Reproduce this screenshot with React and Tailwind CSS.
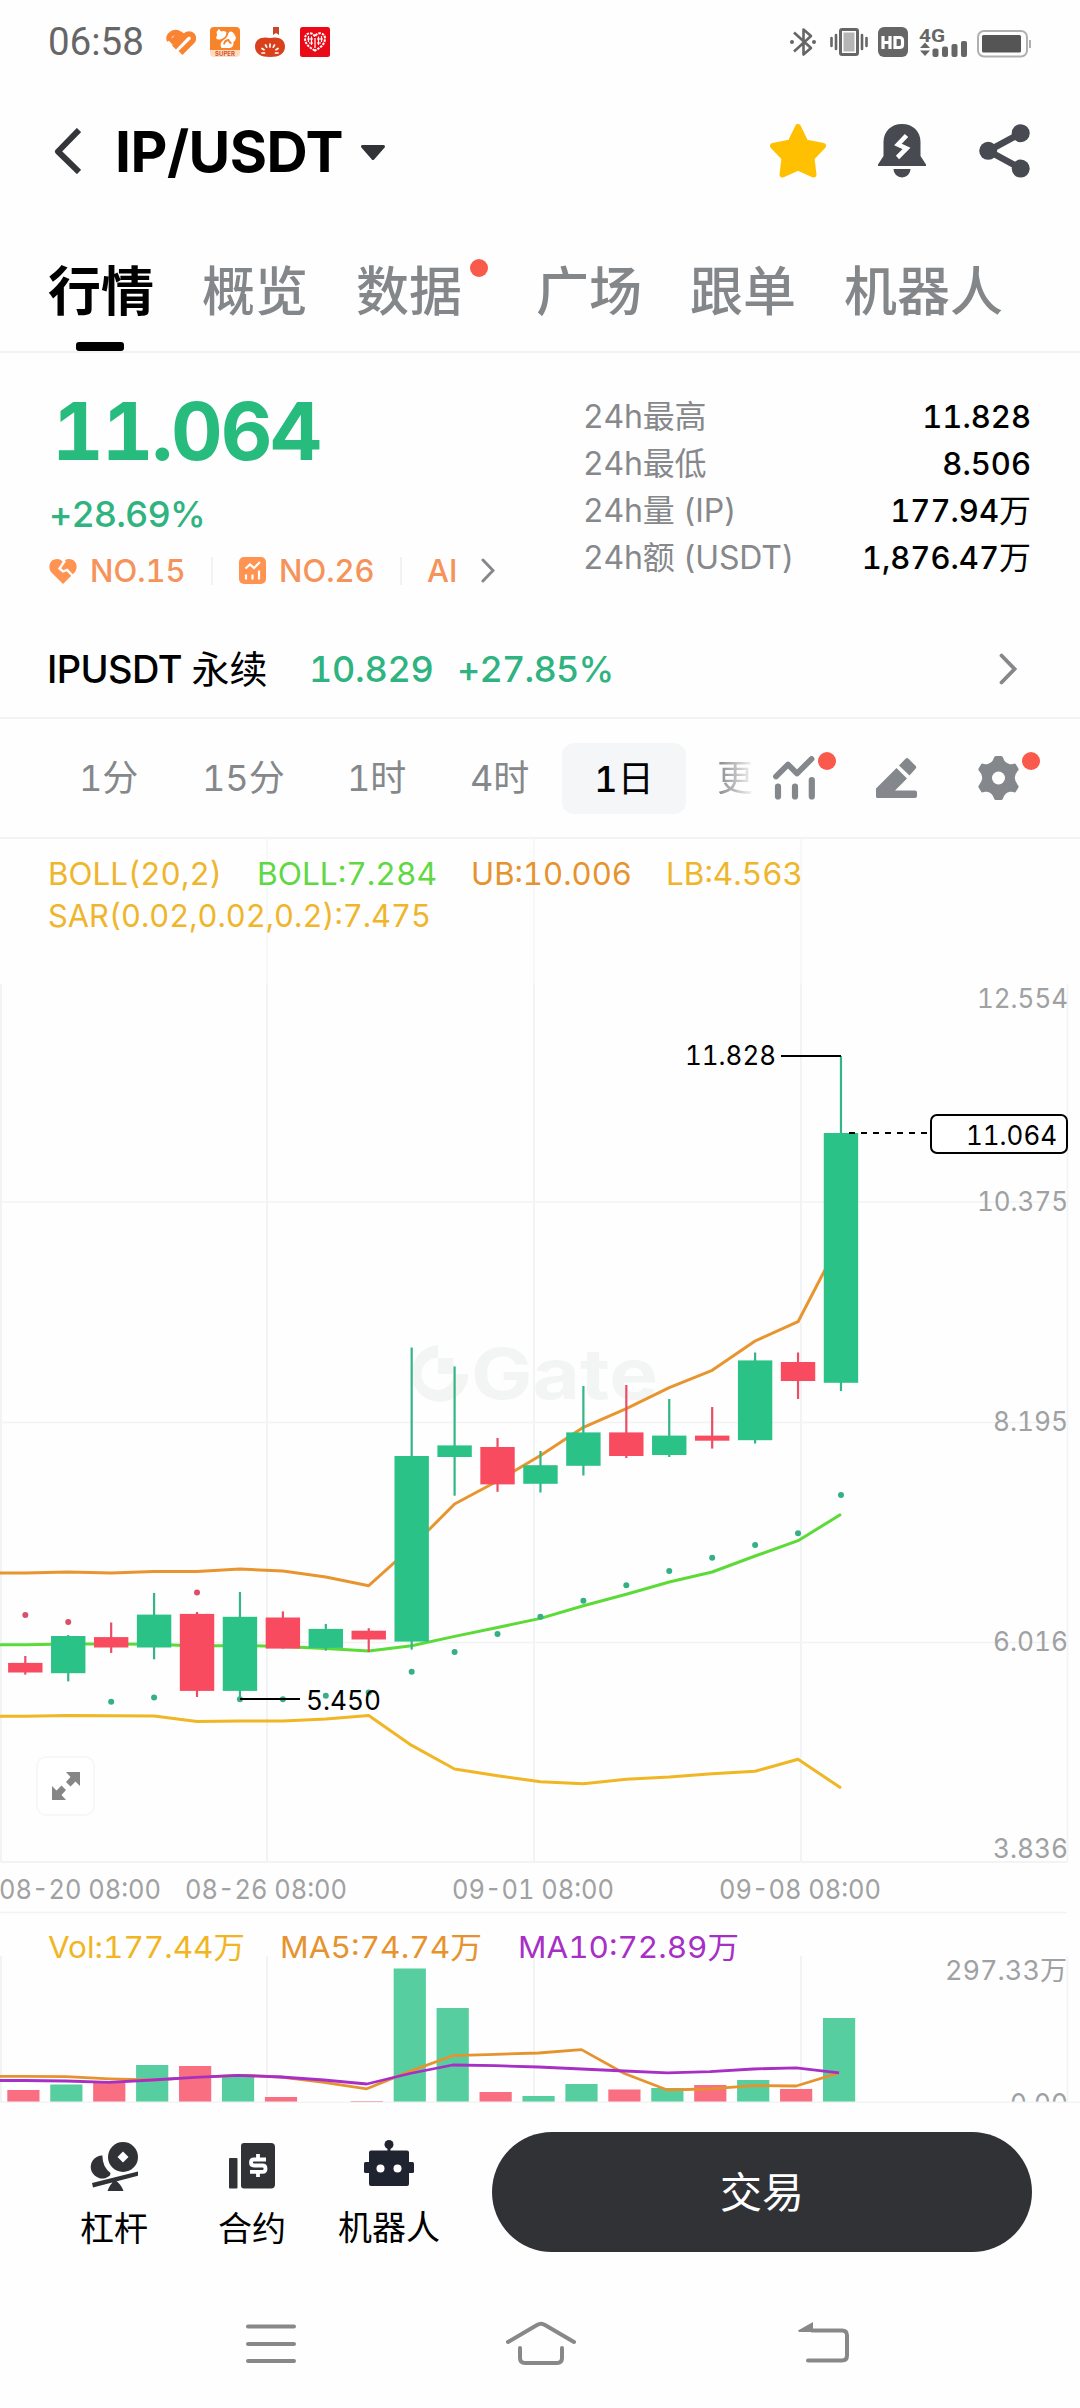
import React from "react";

const UP = "#2bc287";
const DOWN = "#f84b60";
const STEP = 42.93;
const cx = (i) => 25.3 + STEP * i;
const vx = (i) => 23.4 + STEP * i;

// [rising, bodyTop, bodyBottom, wickTop, wickBottom]
const candles = [
  [0, 1662.9, 1672.5, 1656, 1674.6],
  [1, 1636, 1673.2, 1635, 1681.4],
  [0, 1637.1, 1647.5, 1622.5, 1652.9],
  [1, 1614.6, 1647.5, 1592.9, 1659.3],
  [0, 1613.9, 1690.9, 1612, 1697],
  [1, 1616.8, 1690.9, 1592, 1700],
  [0, 1617.5, 1648.6, 1611.4, 1648.6],
  [1, 1628.9, 1647.9, 1623.9, 1650.7],
  [0, 1630.7, 1639.5, 1628.2, 1652],
  [1, 1456, 1641.6, 1347.5, 1649.6],
  [1, 1445.4, 1457, 1366.4, 1495.7],
  [0, 1447, 1484.4, 1438, 1491.8],
  [1, 1465.2, 1483.8, 1451, 1492.5],
  [1, 1432.4, 1465.8, 1386, 1475.5],
  [0, 1432.4, 1456, 1385, 1458],
  [1, 1435.6, 1455, 1399, 1457],
  [0, 1435.6, 1440.7, 1407, 1448.6],
  [1, 1360.4, 1440.2, 1352.5, 1443.5],
  [0, 1362, 1381, 1352.5, 1399],
  [1, 1133, 1382.8, 1056, 1391],
];
const upper = [1573, 1572, 1573, 1571.4, 1571.4, 1569, 1571, 1577, 1585.7, 1547, 1504, 1481, 1455.5, 1427.3, 1408.7, 1387.7, 1370.3, 1341, 1321.7, 1239];
const middle = [1644.8, 1644, 1644, 1644.3, 1646, 1645.4, 1646.4, 1648.6, 1651, 1645.7, 1636.4, 1627.5, 1618.4, 1605.7, 1594.3, 1582, 1572, 1556, 1540.7, 1514.3];
const lower = [1716.2, 1715.4, 1715.8, 1716, 1721.4, 1721, 1721, 1719, 1715.4, 1745.4, 1769, 1775.7, 1781.7, 1783.7, 1779.3, 1777, 1773.7, 1771.3, 1759.3, 1788];
const sar = [
  [0, 1615], [0, 1622], [1, 1701.8], [1, 1697.5], [0, 1592.5], [1, 1699.3], [1, 1699.3], [1, 1695.7], [1, 1692.5], [1, 1671.8],
  [1, 1652], [1, 1634], [1, 1616.8], [1, 1600.7], [1, 1585.3], [1, 1571], [1, 1557.7], [1, 1545], [1, 1533.3], [1, 1495],
];
const volume = [2090, 2084.5, 2083, 2065, 2066, 2077, 2097, 2102, 2101, 1968.5, 2008, 2092, 2096, 2084, 2089.5, 2088, 2085, 2080, 2089, 2018];
const ma5 = [2076.3, 2076.7, 2078.8, 2080, 2077.4, 2075.3, 2077, 2082.4, 2088.8, 2071.4, 2055.7, 2054.3, 2053, 2049.6, 2073.5, 2090, 2088.8, 2085.6, 2086, 2072.8];
const ma10 = [2080.5, 2081, 2082.4, 2080, 2077.4, 2075.3, 2077, 2080, 2084, 2073.5, 2065, 2065.7, 2067, 2069, 2071, 2072.8, 2071.7, 2069, 2067.8, 2072.8];

const line = (ys, fx) => `-2,${ys[0]} ` + ys.map((y, i) => `${fx(i)},${y}`).join(" ");

function Label({ x, y, w, size = 27, fill = "#9fa1a3", weight = 400, children }) {
  return (
    <text x={x} y={y} fontSize={size} fill={fill} fontWeight={weight} textLength={w} lengthAdjust="spacingAndGlyphs">
      {children}
    </text>
  );
}

function Chart() {
  return (
    <svg className="block h-[1264px] w-[1080px] tabular-nums" viewBox="0 839 1080 1264">
      <g fill="#f3f5f5">
        <path d="M438 1345v13a16 16 0 1 0 15.5 16h15A28.5 28.5 0 1 1 438 1345zM438 1358h15.5v16H438z" />
        <text x="471" y="1399" fontSize="70" fontWeight="700" textLength="187" lengthAdjust="spacingAndGlyphs">Gate</text>
      </g>
      <g stroke="#f2f3f4" strokeWidth="2">
        {[1, 267, 534, 801].map((x) => (
          <path key={x} d={`M${x} 984V1862M${x} 1956V2102`} />
        ))}
        <path d="M1067.5 984V1862M1067.5 1956V2102" strokeWidth="1.5" />
        <path d="M267 839V984M534 839V984M801 839V984" stroke="#f8f8f9" />
        <path d="M0 1202H1067M0 1422.5H1067M0 1642.5H1067M0 1912.5H1067" strokeWidth="1.3" />
        <path d="M0 1862H1067" />
      </g>
      <Label x={977} y={1008} w={91}>12.554</Label>
      <Label x={977} y={1211} w={91}>10.375</Label>
      <Label x={993} y={1431} w={75}>8.195</Label>
      <Label x={993} y={1651} w={75}>6.016</Label>
      <Label x={993} y={1858} w={75}>3.836</Label>

      <g fill="none" strokeWidth="3" strokeLinejoin="round">
        <polyline points={line(upper, cx)} stroke="#e8952f" />
        <polyline points={line(middle, cx)} stroke="#5cdb38" />
        <polyline points={line(lower, cx)} stroke="#f0b624" />
      </g>
      {candles.map(([up, top, bottom, high, low], i) => (
        <g key={i} fill={up ? UP : DOWN}>
          <rect x={cx(i) - 1.1} y={high} width="2.2" height={low - high} fill={up ? "#34b585" : "#e84f64"} />
          <rect x={cx(i) - 17.2} y={top} width="34.4" height={bottom - top} />
        </g>
      ))}
      {sar.map(([up, y], i) => (
        <circle key={i} cx={cx(i)} cy={y} r="3" fill={up ? "#35b083" : "#dd4f69"} />
      ))}

      <path d="M781 1056H841M240 1699H300" stroke="#000" strokeWidth="2" />
      <path d="M849 1133H930" stroke="#000" strokeWidth="2" strokeDasharray="6 6" />
      <rect x="931" y="1115" width="136" height="38" rx="6" fill="#fff" stroke="#000" strokeWidth="2" />
      <Label x={685} y={1065} w={91} fill="#000">11.828</Label>
      <Label x={966} y={1145} w={91} fill="#000">11.064</Label>
      <Label x={306} y={1710} w={75} fill="#000">5.450</Label>

      <Label x={48} y={885} w={174} size={31} fill="#efb52b">BOLL(20,2)</Label>
      <Label x={257} y={885} w={180} size={31} fill="#5fd843">BOLL:7.284</Label>
      <Label x={471} y={885} w={161} size={31} fill="#e6932f">UB:10.006</Label>
      <Label x={666} y={885} w={137} size={31} fill="#efb52b">LB:4.563</Label>
      <Label x={48} y={927} w={383} size={31} fill="#efb52b">SAR(0.02,0.02,0.2):7.475</Label>

      <Label x={-1} y={1899} w={162}>08-20 08:00</Label>
      <Label x={185} y={1899} w={162}>08-26 08:00</Label>
      <Label x={452} y={1899} w={162}>09-01 08:00</Label>
      <Label x={719} y={1899} w={162}>09-08 08:00</Label>

      {volume.map((y, i) => (
        <rect key={i} x={vx(i) - 16.1} y={y} width="32.2" height={2102 - y} fill={candles[i][0] ? "#56ce9f" : "#f96f81"} />
      ))}
      <g fill="none" strokeWidth="2.8" strokeLinejoin="round">
        <polyline points={line(ma5, vx)} stroke="#e6932f" />
        <polyline points={line(ma10, vx)} stroke="#a72fc6" />
      </g>
      <Label x={48} y={1957.5} w={197} size={30} fill="#f1b51f">Vol:177.44万</Label>
      <Label x={280} y={1957.5} w={202} size={30} fill="#e6932f">MA5:74.74万</Label>
      <Label x={518} y={1957.5} w={221} size={30} fill="#a72fc6">MA10:72.89万</Label>
      <Label x={945} y={1980} w={122}>297.33万</Label>
      <Label x={1010} y={2113} w={58}>0.00</Label>
      <rect x="0" y="2101.5" width="1080" height="2" fill="#f2f3f4" />
    </svg>
  );
}

function StatusBar() {
  return (
    <div className="flex h-[84px] items-center pl-12 pr-12 text-[#666]">
      <span className="w-[97px] font-[Roboto] text-[38.5px] leading-none">06:58</span>
      <svg className="ml-[21px]" width="30" height="26" viewBox="0 0 30 26">
        <g stroke="#f98330" strokeLinecap="butt" strokeWidth="5.4" fill="none">
          <path d="M3.500 11.500a5 5 0 0 1 2-6.500q4-3 8.500 0L5 14" />
          <path d="M8 18.500L20 6.200a4.300 4.300 0 0 1 6.200 6.200L14.500 24" />
          <path d="M13.500 19.500L21 12" stroke="#fff" strokeWidth="1.600" />
        </g>
      </svg>
      <svg className="ml-[14px]" width="30" height="30" viewBox="0 0 30 30">
        <rect width="30" height="30" rx="4" fill="#ffdcc0" />
        <path d="M4 0h22a4 4 0 0 1 4 4v19H0V4a4 4 0 0 1 4-4z" fill="#f8842a" />
        <path d="M6.500 5L9 2l2 2.500q4-1.500 5.500 1-.500 5-5 6.500Q7.500 13.500 6 11q2-3 .5-6z" fill="#fff" />
        <path d="M24.500 7.500q-3-5-6-1.500-1 5-5 7-4.500 3-2 8h8.500q4-1 3.500-6 4-3 1-7.500z" fill="#fff" />
        <path d="M14 17.500q.5-4 4.500-4.500 1 3 3 3" fill="none" stroke="#f8842a" strokeWidth="1.800" />
        <text x="15" y="28.500" fontSize="6" fontWeight="700" textAnchor="middle" fill="#d5532b">SUPER</text>
      </svg>
      <svg className="ml-[15px]" width="30" height="30" viewBox="0 0 30 30">
        <path d="M18 0h6v8l-3-2-3 2z" fill="#c9472b" />
        <path d="M15 11c8-2 15 1 15 8.500C30 27 24 30 15 30S0 27 0 19.500C0 12 7 9 15 11z" fill="#d9401c" />
        <path d="M15 17v3M10.500 18l1.200 2.200M19.500 18l-1.200 2.200M7 21.500l2 1.200M23 21.500l-2 1.200M7 26h2.500M20.500 26H23" stroke="#fff" strokeWidth="1.700" strokeLinecap="round" />
      </svg>
      <svg className="ml-[15px]" width="30" height="30" viewBox="0 0 30 30">
        <rect width="30" height="30" rx="2.500" fill="#ea0a17" />
        <path d="M15 23.500C8 20 5 16 5 11.500c0-6 7.500-7 10-2 2.500-5 10-4 10 2C25 16 22 20 15 23.500z" fill="none" stroke="#fff" strokeWidth="2" strokeDasharray="2.500 1" />
        <path d="M8.500 9v6M11.500 9.500V18M18.500 9.500V18M21.500 9v6M15 11v10M7 12h6M17 12h6M9 16h4M17 16h4" stroke="#fff" strokeWidth="1.200" />
      </svg>

      <svg className="ml-auto" width="26" height="30" viewBox="0 0 26 30" fill="none" stroke="#666" strokeWidth="2.600">
        <path d="M4 5.500L21 21l-7.500 6.500V2.500L21 9 4 24.500" strokeLinejoin="round" />
        <circle cx="2" cy="15" r="2" fill="#666" stroke="none" />
        <circle cx="24" cy="15" r="2" fill="#666" stroke="none" />
      </svg>
      <svg className="ml-[14px]" width="38" height="30" viewBox="0 0 38 30">
        <rect x="10.500" y="2.500" width="17" height="25" rx="1.500" fill="none" stroke="#666" strokeWidth="3" />
        <rect x="13.500" y="5.500" width="11" height="19" fill="#b5b5b5" />
        <path d="M1.500 11v8M6 8v14M32 8v14M36.500 11v8" stroke="#666" strokeWidth="2.600" strokeLinecap="round" />
      </svg>
      <svg className="ml-[10px]" width="30" height="30" viewBox="0 0 30 30">
        <rect width="30" height="30" rx="6" fill="#666" />
        <path d="M5 9v13M12 9v13M5 15.500h7M17 10.500h4.500q3 0 3 3v4q0 3-3 3H17z" fill="none" stroke="#fff" strokeWidth="3.200" />
      </svg>
      <svg className="ml-[12px] overflow-visible" width="48" height="32" viewBox="0 0 48 32" fill="#666">
        <text x="-1" y="15.500" fontSize="19" fontWeight="700" textLength="26" lengthAdjust="spacingAndGlyphs" fontFamily="Roboto">4G</text>
        <path d="M0 22l5-5.500 5 5.500zM0 24.500h10L5 30z" />
        <rect x="12.500" y="22.500" width="6" height="8.500" rx="2" />
        <rect x="22" y="20.500" width="6" height="10.500" rx="2" />
        <rect x="31.500" y="18" width="6" height="13" rx="2" />
        <rect x="41" y="15" width="6" height="16" rx="2" />
      </svg>
      <svg className="ml-[9px] mt-[3px]" width="55" height="28" viewBox="0 0 55 28">
        <rect x="1" y="1" width="49" height="25.500" rx="6" fill="none" stroke="#b0b0b0" strokeWidth="2" />
        <rect x="5" y="5" width="39" height="17.500" rx="1.500" fill="#555" />
        <path d="M53 10v8" stroke="#b0b0b0" strokeWidth="2" />
      </svg>
    </div>
  );
}

function Header() {
  return (
    <div className="flex h-[134px] items-center pl-[54px] pr-[50px]">
      <svg width="27" height="46" viewBox="0 0 27 46" fill="none" stroke="#35363a" strokeWidth="6">
        <path d="M25 2L4 23.500 25 44" strokeLinejoin="round" />
      </svg>
      <h1 className="ml-[34px] w-[229px] whitespace-nowrap text-[57px] font-bold leading-none tracking-[-0.5px]">IP/USDT</h1>
      <svg className="ml-[16px] mt-[3px]" width="26" height="18" viewBox="0 0 26 18">
        <path d="M2.500 2.500h21L13 14.500z" fill="#323337" stroke="#323337" strokeWidth="3" strokeLinejoin="round" />
      </svg>
      <svg className="ml-auto" width="56" height="54" viewBox="0 0 56 54">
        <path d="M28 3l7.500 15.500L53 22 41.500 34l2 16.500L28 43.500 12.500 50.500l2-16.500L3 22l17.500-3.500z" fill="#ffc002" stroke="#ffc002" strokeWidth="6" strokeLinejoin="round" />
      </svg>
      <svg className="ml-[52px]" width="48" height="54" viewBox="0 0 48 54">
        <path d="M24 0c11 0 18.500 7.500 18.500 18v14L48 40.500q.5 1.500-1 1.500H1q-1.500 0-1-1.500L5.500 32V18C5.500 7.500 13 0 24 0zM15.500 45h17a8.500 8.500 0 0 1-17 0z" fill="#474a51" />
        <path d="M28.500 11.500l-8.500 9 8.500 4-9 9" fill="none" stroke="#fff" strokeWidth="4.600" />
      </svg>
      <svg className="ml-[53px]" width="51" height="54" viewBox="0 0 51 54" fill="#474a51">
        <path d="M41.700 9.300L9.300 26.800 41.700 44.500" fill="none" stroke="#474a51" strokeWidth="6.500" />
        <circle cx="41.700" cy="9.200" r="9" />
        <circle cx="9.200" cy="26.800" r="9" />
        <circle cx="41.700" cy="44.600" r="9" />
      </svg>
    </div>
  );
}

const tabs = ["行情", "概览", "数据", "广场", "跟单", "机器人"];

function Tabs() {
  return (
    <nav className="flex h-[135px] gap-12 border-b-2 border-[#f3f3f4] pl-12 pt-[38px] text-[53px] font-medium leading-[72px] text-[#84878a]">
      {tabs.map((t, i) => (
        <div key={t} className={i === 0 ? "relative font-bold text-black" : i === 2 ? "relative pr-[26px]" : "relative"}>
          {t}
          {i === 0 && <span className="absolute bottom-0 left-[28px] h-[9px] w-12 rounded-[3px] bg-black" />}
          {i === 2 && <span className="absolute right-0 top-[3px] h-[18px] w-[18px] rounded-full bg-[#fa5a4b]" />}
        </div>
      ))}
    </nav>
  );
}

function Chevron({ className }) {
  return (
    <svg className={className} viewBox="0 0 18 32" fill="none" stroke="#85878a" strokeWidth="3.800" strokeLinecap="round">
      <path d="M2.500 2.500L15.500 16 2.500 29.500" />
    </svg>
  );
}

const stats = [
  ["24h最高", "11.828", ""],
  ["24h最低", "8.506", ""],
  ["24h量 (IP)", "177.94", "万"],
  ["24h额 (USDT)", "1,876.47", "万"],
];

function Ticker() {
  return (
    <section className="flex h-[268px] justify-between pl-[49px] pr-[49px]">
      <div>
        <div className="mt-[33px] h-[88px] pl-[3px] text-[80px] font-bold leading-[90px] tracking-[-2px] text-[#27bb7d]">11.064</div>
        <div className="h-20 text-[36px] font-medium leading-[80px] tracking-[-0.9px] text-[#2fb380]">+28.69%</div>
        <div className="flex h-[33px] items-center text-[31px] font-medium leading-[33px] text-[#f5935a]">
          <svg width="28" height="26" viewBox="0 0 28 26">
            <path d="M14 26L2.500 14.500C-2 9 1 1 8 1c3 0 5 1.500 6 3 1-1.500 3-3 6-3 7 0 10 8 5.500 13.500z" fill="#ff9351" />
            <path d="M16 2.500l-5.500 8 3.500 3 4-1.500 6 6" fill="none" stroke="#fff" strokeWidth="2.400" />
          </svg>
          <span className="ml-[13px] w-[98px]">NO.15</span>
          <i className="ml-[23px] h-7 w-[2px] bg-[#f2f2f3]" />
          <svg className="ml-[26px]" width="27" height="27" viewBox="0 0 27 27">
            <rect width="27" height="27" rx="5" fill="#ff9351" />
            <path d="M6.500 11.500l4.500-4 4 3.500 6-6M7 17.500v5M13.500 17.500v5M20 13.500v9" fill="none" stroke="#fff" strokeWidth="2.200" />
          </svg>
          <span className="ml-[13px] w-[98px]">NO.26</span>
          <i className="ml-[23px] h-7 w-[2px] bg-[#f2f2f3]" />
          <span className="ml-[25px] w-[30px]">AI</span>
          <Chevron className="ml-[24px] h-[25px] w-[14px]" />
        </div>
      </div>
      <div className="w-[447px] pt-10 text-[31px]">
        {stats.map(([k, v, unit]) => (
          <div key={k} className="flex h-[47px] justify-between leading-[48px]">
            <span className="-ml-px text-[32px] tracking-[-0.2px] text-[#86888b]">{k}</span>
            <span className="font-medium text-black">
              {v}
              <span className="text-[32px] font-normal">{unit}</span>
            </span>
          </div>
        ))}
      </div>
    </section>
  );
}

function FuturesRow() {
  return (
    <div className="flex h-[98px] items-center border-b-2 border-[#f3f3f4] pl-[47px] pr-[63px] text-[38px] leading-none">
      <span className="w-[262px] whitespace-nowrap font-medium tracking-[-0.6px]">
        IPUSDT <span className="font-normal tracking-normal">永续</span>
      </span>
      <span className="w-[148px] text-[36px] font-medium tracking-[-0.3px] text-[#2fb380]">10.829</span>
      <span className="text-[36px] font-medium tracking-[-0.8px] text-[#2fb380]">+27.85%</span>
      <Chevron className="ml-auto h-8 w-[18px]" />
    </div>
  );
}

function Toolbar() {
  return (
    <div className="flex h-[120px] items-center border-b-2 border-[#f3f3f4] pl-[50px] text-[36px] leading-[73px] text-[#85888b]">
      <span className="w-[123px] pl-[29px]">1分</span>
      <span className="w-[145px] pl-[29px]">15分</span>
      <span className="w-[122px] pl-[29px]">1时</span>
      <span className="w-[122px] pl-[30px]">4时</span>
      <span className="h-[71px] w-[124px] rounded-xl bg-[#f4f6f8] text-center text-black">
        <span className="font-medium">1</span>日
      </span>
      <span className="ml-[31px] w-[36px] bg-linear-to-r from-[#85888b] to-[#f4f4f4] bg-clip-text text-transparent">更</span>
      <div className="relative ml-[20px]">
        <svg width="43" height="44" viewBox="0 0 43 44" fill="none" stroke="#84888c" strokeWidth="6.500">
          <path d="M3 20.500L15 8.500l9 9L38.500 3" strokeLinejoin="round" strokeLinecap="round" strokeWidth="5.800" />
          <path d="M5 30.500v10M22 30.500v10M38.800 24v16.500" strokeLinecap="round" strokeWidth="6.200" />
        </svg>
        <i className="absolute -right-[20px] -top-[4px] h-[18px] w-[18px] rounded-full bg-[#fa5a4b]" />
      </div>
      <svg className="ml-[60px]" width="41" height="42" viewBox="0 0 41 42" fill="#84888c">
        <path d="M20.500 11L31 21.500 19 33.500h20a2 2 0 0 1 2 2v3.500a2 2 0 0 1-2 2H1.500A1.500 1.500 0 0 1 0 39.500V31.500z" />
        <path d="M29.500 1.800q1.500-1.500 3 0l7 7q1.500 1.500 0 3L33.500 18.500 23 8.500z" />
      </svg>
      <div className="relative ml-[61px]">
        <svg width="41" height="44" viewBox="0 0 41 44">
          <path
            d="M16 1.500Q16.500 0 18 0h5q1.500 0 2 1.500Q26.500 7 32 8.200q3 .3 4.500-.7 1 0 1.500 1l2.500 4.300q.5 1-.5 2-6.500 6.700 0 14.400 1 1 .5 2L38 35.500q-.5 1-1.500 1-1.500-1-4.500-.7-5.500 1.200-7 6.700-.5 1.500-2 1.500h-5q-1.500 0-2-1.500Q14.500 37 9 35.800q-3-.3-4.500.7-1 0-1.500-1L.500 31.200q-.5-1 .5-2 6.500-7.700 0-14.400-1-1-.5-2L3 8.500q.5-1 1.500-1 1.500 1 4.500.7Q14.500 7 16 1.500z"
            fill="#84888c"
          />
          <circle cx="20.500" cy="22" r="6.500" fill="#fff" />
        </svg>
        <i className="absolute -right-[21px] -top-[4px] h-[18px] w-[18px] rounded-full bg-[#fa5a4b]" />
      </div>
    </div>
  );
}

function BottomBar() {
  return (
    <div className="flex h-[160px] pl-[50px] text-[34px] leading-[40px]">
      <div className="flex w-[128px] flex-col items-center pt-[39px]">
        <svg width="48" height="49" viewBox="0 0 48 49" fill="#303236">
          <circle cx="33" cy="15" r="15" />
          <path d="M33 9.500l5.500 5.500-5.500 5.500-5.500-5.500z" fill="#fff" />
          <path d="M12.500 13.500A11.500 11.500 0 1 0 20 33.500L20.500 31Q12 24 12.500 13.500z" />
          <path d="M2 41l46-11.500 1 4L3 45.500zM25 38q6 4 8.500 11h-16Q20 42 25 38z" />
        </svg>
        <span className="mt-[18px]">杠杆</span>
      </div>
      <div className="ml-[10px] flex w-[128px] flex-col items-center pt-10">
        <svg width="46" height="46" viewBox="0 0 46 46">
          <path d="M1 15h6.500q1 0 1 1v28.500q0 1-1 1H1q-1 0-1-1V16q0-1 1-1zM15 0h27q4 0 4 4v37.500q0 4-4 4H15q-3 0-3-3V3q0-3 3-3z" fill="#303236" />
          <path d="M37 16.500H25q-3 0-3 3t3 3h8.500q3 0 3 3.200t-3 3.200H21M29 11v5M29 29v5" fill="none" stroke="#fff" strokeWidth="3.800" />
        </svg>
        <span className="mt-5">合约</span>
      </div>
      <div className="flex w-[146px] flex-col items-center pt-[37px]">
        <svg width="50" height="46" viewBox="0 0 50 46" fill="#202431">
          <circle cx="25" cy="4.500" r="4.500" />
          <path d="M23.500 7h3v5h-3z" />
          <rect x="5" y="10.500" width="40" height="35.500" rx="2" />
          <rect y="22" width="50" height="11" rx="1.500" />
          <circle cx="16.500" cy="28.500" r="4" fill="#fff" />
          <circle cx="33.500" cy="28.500" r="4" fill="#fff" />
        </svg>
        <span className="mt-[22px]">机器人</span>
      </div>
      <button className="ml-[30px] mt-[29px] h-[120px] w-[540px] rounded-full bg-[#313236] pt-px text-[42px] text-white">交易</button>
    </div>
  );
}

function SystemNav() {
  return (
    <div className="flex h-[144px] items-start pt-[58px] text-[#888]">
      <svg className="ml-[246px]" width="50" height="42" viewBox="0 0 50 42" stroke="currentColor" strokeWidth="4" strokeLinecap="round">
        <path d="M2 5.500h46M2 23h46M2 40h46" />
      </svg>
      <svg className="ml-[210px]" width="70" height="44" viewBox="0 0 70 44" fill="none" stroke="currentColor" strokeWidth="4" strokeLinecap="round">
        <path d="M2 21L31 4q4-2.500 8 0l29 17M14 27v10q0 5 5 5h32q5 0 5-5V27" />
      </svg>
      <svg className="ml-[222px]" width="52" height="42" viewBox="0 0 52 42">
        <path d="M14 9.500h30q5 0 5 5v20q0 5-5 5H10" fill="none" stroke="currentColor" strokeWidth="4" strokeLinecap="round" />
        <path d="M0 9.500L15 1v10H1z" fill="currentColor" />
      </svg>
    </div>
  );
}

export default function App() {
  return (
    <div className="h-[2408px] w-[1080px] overflow-hidden bg-[#fefefe] font-[Inter,'Noto_Sans_CJK_SC',sans-serif] tabular-nums text-black">
      <StatusBar />
      <Header />
      <Tabs />
      <Ticker />
      <FuturesRow />
      <Toolbar />
      <div className="relative">
        <Chart />
        <div className="absolute left-[36px] top-[917px] flex h-[60px] w-[59px] items-center justify-center rounded-[10px] border-2 border-[#f6f7f7] bg-white">
          <svg width="28" height="28" viewBox="0 0 28 28" fill="#868686">
            <path d="M14 0h14v14l-4.500-4.500-5 5-4.500-4.500 4.500-5zM14 28H0V14l4.500 4.500 5-5 4.500 4.500-4.500 5z" />
          </svg>
        </div>
      </div>
      <BottomBar />
      <SystemNav />
    </div>
  );
}
